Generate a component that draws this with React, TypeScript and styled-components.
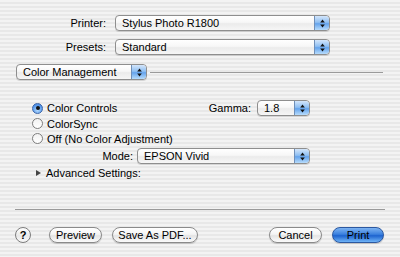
import React from "react";
import styled, { createGlobalStyle } from "styled-components";

const GlobalStyle = createGlobalStyle`
  html, body {
    margin: 0;
    padding: 0;
  }
  body {
    width: 400px;
    height: 257px;
    overflow: hidden;
    font-family: "Liberation Sans", Arial, sans-serif;
    font-size: 11px;
    color: #000;
    background: repeating-linear-gradient(
      to bottom,
      #f3f3f3 0px,
      #f3f3f3 2px,
      #e8e8e8 2px,
      #e8e8e8 4px
    );
  }
`;

export default function App() {
  return (
    <>
      <GlobalStyle />
      <Dialog>
        <FormGrid>
          <FieldLabel>Printer:</FieldLabel>
          <PopUp width={215} label="Stylus Photo R1800" />
          <FieldLabel>Presets:</FieldLabel>
          <PopUp width={215} label="Standard" />
        </FormGrid>

        <SectionHeader>
          <PopUp width={131} label="Color Management" />
          <HeaderRule />
        </SectionHeader>

        <Panel>
          <OptionRow>
            <Radio label="Color Controls" checked />
            <InlineField>
              <FieldLabel>Gamma:</FieldLabel>
              <PopUp width={53} label="1.8" />
            </InlineField>
          </OptionRow>
          <OptionRow>
            <Radio label="ColorSync" />
          </OptionRow>
          <OptionRow>
            <Radio label="Off (No Color Adjustment)" />
          </OptionRow>
          <ModeRow>
            <FieldLabel>Mode:</FieldLabel>
            <PopUp width={173} label="EPSON Vivid" />
          </ModeRow>
          <Disclosure>
            <Triangle />
            Advanced Settings:
          </Disclosure>
        </Panel>

        <Separator />

        <ButtonBar>
          <HelpButton>?</HelpButton>
          <PushButton width={53}>Preview</PushButton>
          <PushButton width={86}>Save As PDF...</PushButton>
          <Spacer />
          <PushButton width={53}>Cancel</PushButton>
          <PushButton width={52} primary>
            Print
          </PushButton>
        </ButtonBar>
      </Dialog>
    </>
  );
}

const PopUp: React.FC<{ width: number; label: string }> = ({ width, label }) => (
  <PopUpBox width={width}>
    <PopUpText>{label}</PopUpText>
    <ArrowBox>
      <svg width="5" height="9" viewBox="0 0 5 9">
        <path d="M2.5 0.5 L4.8 3.4 L0.2 3.4 Z" fill="#111" />
        <path d="M2.5 8.5 L4.8 5.6 L0.2 5.6 Z" fill="#111" />
      </svg>
    </ArrowBox>
  </PopUpBox>
);

const Radio: React.FC<{ label: string; checked?: boolean }> = ({ label, checked }) => (
  <RadioWrap>
    <RadioDot checked={!!checked} />
    {label}
  </RadioWrap>
);

const Dialog = styled.div`
  display: flex;
  flex-direction: column;
  width: 400px;
  height: 257px;
`;

const FormGrid = styled.div`
  display: grid;
  grid-template-columns: 106px 215px;
  column-gap: 9px;
  row-gap: 8px;
  margin-top: 15px;
  align-items: center;
`;

const FieldLabel = styled.span`
  text-align: right;
  line-height: 16px;
  white-space: nowrap;
`;

const PopUpBox = styled.div<{ width: number }>`
  display: flex;
  align-items: stretch;
  box-sizing: border-box;
  width: ${p => p.width}px;
  height: 16px;
  border: 1px solid #8e8e8e;
  border-radius: 4px;
  background: linear-gradient(
    to bottom,
    #ffffff 0%,
    #f7f7f7 45%,
    #ebebeb 55%,
    #f6f6f6 100%
  );
  box-shadow: 0 1px 0 rgba(0, 0, 0, 0.12);
  overflow: hidden;
`;

const PopUpText = styled.span`
  flex: 1;
  padding-left: 6px;
  line-height: 14px;
  white-space: nowrap;
  overflow: hidden;
`;

const ArrowBox = styled.span`
  display: flex;
  align-items: center;
  justify-content: center;
  width: 14px;
  border-left: 1px solid #6f8fb8;
  border-radius: 0 3px 3px 0;
  background: linear-gradient(
    to bottom,
    #d4e6fb 0%,
    #8fbff2 45%,
    #64a3ec 55%,
    #b7dcfc 100%
  );
`;

const SectionHeader = styled.div`
  display: flex;
  align-items: center;
  margin-top: 9px;
  padding: 0 17px 0 16px;
`;

const HeaderRule = styled.div`
  flex: 1;
  height: 1px;
  margin-left: 3px;
  background: #9a9a9a;
`;

const Panel = styled.div`
  display: flex;
  flex-direction: column;
  width: 278px;
  margin: 20px 0 0 32px;
`;

const OptionRow = styled.div`
  display: flex;
  align-items: center;
  justify-content: space-between;
  height: 16px;

  & + & {
    height: 15px;
  }
`;

const InlineField = styled.div`
  display: flex;
  align-items: center;
  gap: 6px;
`;

const RadioWrap = styled.label`
  display: flex;
  align-items: center;
  gap: 4px;
  white-space: nowrap;
`;

const RadioDot = styled.span<{ checked: boolean }>`
  position: relative;
  box-sizing: border-box;
  width: 11px;
  height: 11px;
  border-radius: 50%;
  border: 1px solid ${p => (p.checked ? "#3a64a8" : "#7e7e7e")};
  background: ${p =>
    p.checked
      ? "radial-gradient(circle at 50% 70%, #b4dafc 0%, #5c9ced 60%, #3f7fd8 100%)"
      : "linear-gradient(to bottom, #f2f2f2 0%, #ffffff 100%)"};

  &::after {
    content: "";
    display: ${p => (p.checked ? "block" : "none")};
    position: absolute;
    left: 2.5px;
    top: 2.5px;
    width: 4px;
    height: 4px;
    border-radius: 50%;
    background: #111;
  }
`;

const ModeRow = styled.div`
  display: flex;
  align-items: center;
  justify-content: flex-end;
  gap: 4px;
  margin-top: 2px;
`;

const Disclosure = styled.div`
  display: flex;
  align-items: center;
  gap: 5px;
  height: 14px;
  margin: 2px 0 0 4px;
  white-space: nowrap;
`;

const Triangle = styled.span`
  width: 0;
  height: 0;
  border-top: 3.5px solid transparent;
  border-bottom: 3.5px solid transparent;
  border-left: 5px solid #444;
`;

const Separator = styled.div`
  height: 1px;
  margin: 29px 15px 0;
  background: #9a9a9a;
`;

const ButtonBar = styled.div`
  display: flex;
  align-items: center;
  gap: 9px;
  margin-top: 17px;
  padding: 0 16px 0 15px;
`;

const Spacer = styled.div`
  flex: 1;
`;

const HelpButton = styled.div`
  display: flex;
  align-items: center;
  justify-content: center;
  box-sizing: border-box;
  width: 16px;
  height: 16px;
  margin-right: 9px;
  border: 1px solid #7c7c7c;
  border-radius: 50%;
  background: linear-gradient(to bottom, #ffffff 0%, #e9e9e9 55%, #f9f9f9 100%);
  font-weight: bold;
  font-size: 11px;
`;

const PushButton = styled.div<{ width: number; primary?: boolean }>`
  display: flex;
  align-items: center;
  justify-content: center;
  box-sizing: border-box;
  width: ${p => p.width}px;
  height: 16px;
  border-radius: 8px;
  border: 1px solid ${p => (p.primary ? "#2c58a0" : "#8a8a8a")};
  background: ${p =>
    p.primary
      ? "linear-gradient(to bottom, #7db3f2 0%, #3a80de 45%, #1d63cf 55%, #6fb4f7 100%)"
      : "linear-gradient(to bottom, #ffffff 0%, #f4f4f4 45%, #e4e4e4 55%, #fbfbfb 100%)"};
  box-shadow: 0 1px 1px rgba(0, 0, 0, 0.18);
  white-space: nowrap;
  & + & {
    margin-left: 1px;
  }
`;
